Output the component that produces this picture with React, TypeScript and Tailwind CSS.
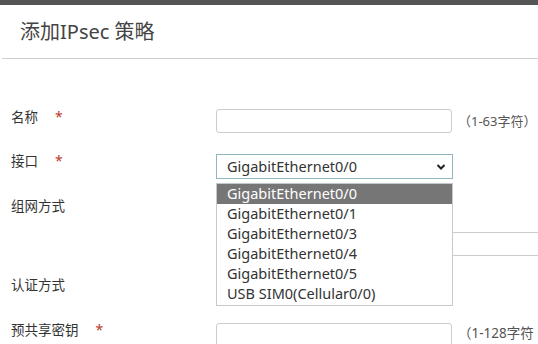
import React from "react";

const options = [
  "GigabitEthernet0/0",
  "GigabitEthernet0/1",
  "GigabitEthernet0/3",
  "GigabitEthernet0/4",
  "GigabitEthernet0/5",
  "USB SIM0(Cellular0/0)",
];

function Req() {
  return <span className="ml-[17px] text-[14px] text-[#c0392b]">*</span>;
}

function Label({ text, req }: { text: string; req?: boolean }) {
  return (
    <div className="w-[205px] shrink-0 flex items-center text-[13.5px] leading-[18px] text-[#333]">
      <span>{text}</span>
      {req && <Req />}
    </div>
  );
}

export default function App() {
  return (
    <div className="relative w-[538px] h-[344px] overflow-hidden bg-white font-['Noto_Sans','Noto_Sans_CJK_SC',sans-serif]">
      <div className="h-[5px] bg-[#555]" />
      <div className="h-[53px] flex items-center pl-[20px] text-[20px] text-[#444]">
        添加IPsec 策略
      </div>
      <div className="ml-[2px] h-px bg-[#cfcfcf]" />

      <div className="pl-[11px] flex flex-col">
        <div className="mt-[50px] flex items-start">
          <div className="-mt-px"><Label text="名称" req /></div>
          <div className="w-[236px] h-[24px] shrink-0 border border-[#ccc] rounded-[3px]" />
          <span className="ml-[6px] whitespace-nowrap text-[13px] leading-[24px] text-[#555]">（1-63字符）</span>
        </div>

        <div className="mt-[21px] flex items-start">
          <div className="-mt-[2px]"><Label text="接口" req /></div>
          <div className="w-[237px] h-[25px] shrink-0 border border-[#8fb5bd] flex items-center justify-between pl-[10px] pr-[6px] text-[14.5px] text-[#333]">
            <span>GigabitEthernet0/0</span>
            <svg width="10" height="8" viewBox="0 0 10 8">
              <path d="M1.5 2 L5 5.5 L8.5 2" fill="none" stroke="#222" strokeWidth="2" />
            </svg>
          </div>
        </div>

        <div className="mt-[18px] flex items-start">
          <Label text="组网方式" />
        </div>

        <div className="mt-[17px] flex">
          <div className="w-[205px] shrink-0" />
          <div className="w-[360px] h-[24px] shrink-0 border border-[#ccc] rounded-[3px]" />
        </div>

        <div className="mt-[20px] flex items-start">
          <Label text="认证方式" />
        </div>

        <div className="mt-[29px] flex items-start">
          <div className="mt-[-2px]"><Label text="预共享密钥" req /></div>
          <div className="w-[236px] h-[24px] shrink-0 border border-[#ccc] rounded-[3px]" />
          <span className="ml-[6px] whitespace-nowrap text-[13.5px] leading-[20px] text-[#555]">（1-128字符</span>
        </div>
      </div>

      <div className="absolute left-[216px] top-[183px] w-[237px] border border-[#c8c8c8] bg-white pb-px">
        {options.map((o, i) => (
          <div
            key={o}
            className={
              i === 0
                ? "h-[20px] pl-[10px] flex items-center text-[14.5px] bg-[#767676] text-white"
                : "h-[20px] pl-[10px] flex items-center text-[14.5px] text-[#333]"
            }
          >
            {o}
          </div>
        ))}
      </div>
    </div>
  );
}
